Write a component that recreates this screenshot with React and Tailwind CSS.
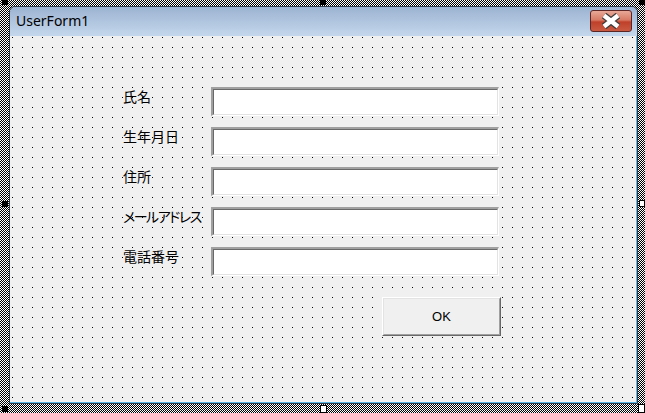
import React from 'react';

const fields = ['氏名', '生年月日', '住所', 'メールアドレス', '電話番号'];

// resize handles around the selected form
const handles = [
  { cls: 'left-[2px] top-0 w-[6px] h-[5px] bg-black' },
  { cls: 'left-[320px] top-0 w-[6px] h-[5px] bg-black' },
  { cls: 'left-[639px] top-0 w-[6px] h-[5px] bg-black' },
  { cls: 'left-[2px] top-[201px] w-[6px] h-[6px] bg-black' },
  { cls: 'left-[2px] top-[406px] w-[6px] h-[6px] bg-black' },
  { cls: 'left-[639px] top-[200px] w-[6px] h-[7px] bg-white border border-black' },
  { cls: 'left-[320px] top-[405px] w-[7px] h-[8px] bg-white border border-black' },
  { cls: 'left-[638px] top-[404px] w-[7px] h-[9px] bg-white border border-black' },
];

const CloseButton = () => (
  <div className="mt-[3px] mr-[5px] w-[42px] h-[22px] rounded-[3px] border border-[#5b2626] bg-[linear-gradient(#e8a898_0%,#d77a64_45%,#c0402a_55%,#c95a42_100%)] flex items-center justify-center">
    <svg width="22" height="16" viewBox="0 0 22 16">
      <path d="M4 2.5 L18 13.5 M18 2.5 L4 13.5" stroke="#3c3c3c" strokeWidth="7" />
      <path d="M4 2.5 L18 13.5 M18 2.5 L4 13.5" stroke="#ffffff" strokeWidth="4.5" />
    </svg>
  </div>
);

const TextBox = () => (
  <div className="flex w-[288px] h-[29px] border-t-2 border-l-2 border-t-[#a0a0a0] border-l-[#a0a0a0] border-b border-r border-b-white border-r-white">
    <div className="flex-1 bg-white border-t border-l border-t-[#696969] border-l-[#696969] border-b border-r border-b-[#e3e3e3] border-r-[#e3e3e3]" />
  </div>
);

const Field = ({ label }) => (
  <div className="flex h-[29px]">
    <div
      className={`w-[90px] -ml-[2px] pl-[2px] pt-[1px] leading-[16px] text-[14px] text-black whitespace-nowrap [font-family:'Noto_Sans_CJK_JP',sans-serif] ${
        label.length > 5 ? '[font-feature-settings:"palt"] tracking-[-1.5px]' : ''
      }`}
    >
      {label}
    </div>
    <TextBox />
  </div>
);

export default function App() {
  return (
    <div className="relative w-[645px] h-[413px] overflow-hidden flex pt-[6px] pl-[9px] pr-[7px] pb-[9px] [background-image:repeating-conic-gradient(#000_0_25%,#fff_0_50%)] [background-size:2px_2px]">
      <div className="flex flex-1 flex-col rounded-t-[6px] border border-[#2f3a48] overflow-hidden">
        {/* title bar */}
        <div className="flex items-start justify-between h-[29px] bg-[linear-gradient(#9cb3d1,#c4d7ec)]">
          <span className="pl-[6px] mt-[5px] leading-[18px] text-[14px] text-black [font-family:'Noto_Sans',sans-serif]">
            UserForm1
          </span>
          <CloseButton />
        </div>

        {/* form body with design grid */}
        <div className="flex-1 flex flex-col pt-[51px] pl-[113px] bg-[#f0f0f0] border-r border-b border-[#5cb6e4] [background-image:conic-gradient(from_270deg_at_1px_1px,#000_25%,transparent_0)] [background-size:10px_10px] [background-position:2px_1px]">
          <div className="flex flex-col gap-[11px]">
            {fields.map((f) => (
              <Field key={f} label={f} />
            ))}
          </div>
          <div className="mt-[21px] ml-[259px] w-[119px] h-[39px] flex border-t border-l border-t-white border-l-white border-b border-r border-b-[#696969] border-r-[#696969]">
            <div className="flex-1 flex items-center justify-center bg-[#f0f0f0] border-t border-l border-t-[#e3e3e3] border-l-[#e3e3e3] border-b border-r border-b-[#a0a0a0] border-r-[#a0a0a0] text-[13px] text-black [font-family:'Liberation_Sans',sans-serif]">
              OK
            </div>
          </div>
        </div>
      </div>

      {handles.map((h, i) => (
        <div key={i} className={`absolute ${h.cls}`} />
      ))}
    </div>
  );
}
